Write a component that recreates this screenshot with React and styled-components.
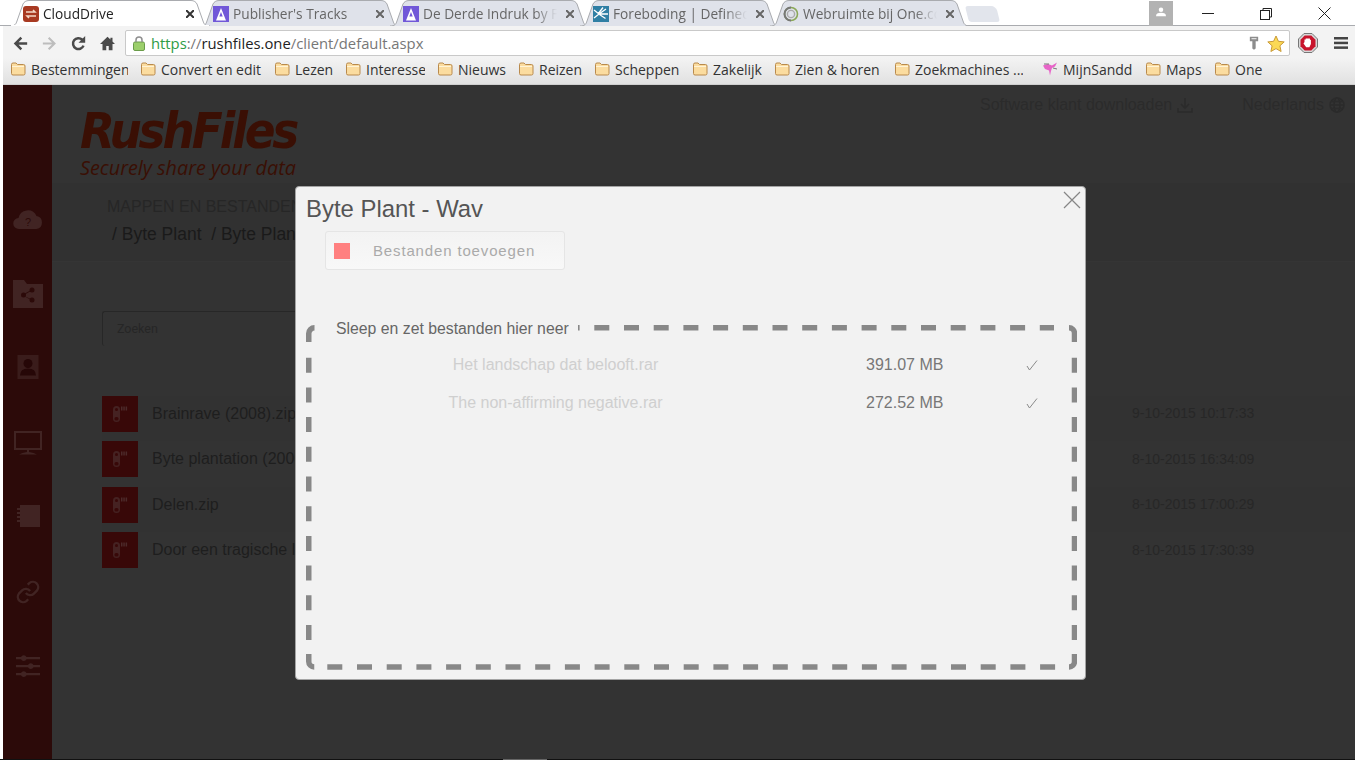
import React from "react";
import styled, { createGlobalStyle } from "styled-components";

const Global = createGlobalStyle`
  html, body { margin: 0; padding: 0; background: #fff; overflow: hidden; }
  * { box-sizing: border-box; }
`;
const UI = `"Open Sans", "Noto Sans", sans-serif`;
const WEB = `"Liberation Sans", Arial, sans-serif`;

const Screen = styled.div`
  width: 1355px; height: 760px; padding-left: 3px; display: flex; flex-direction: column;
  background: #fff; overflow: hidden;
`;
const TabStrip = styled.div`
  height: 26px; margin-left: -3px; padding-left: 10px; display: flex; align-items: flex-start; position: relative;
  border-bottom: 1px solid #a9abaf; background: #fff; flex: none;
`;
const Tab = styled.div`
  position: relative; width: 200px; height: 26px; margin-right: -10px; flex: none;
  display: flex; align-items: center; padding: 1px 0 0 13px; z-index: ${p => (p.$active ? 2 : 1)};
  color: ${p => (p.$active ? "#222" : "#666")};
  font: 13.7px ${UI};
`;
const TabShape = styled.svg`
  position: absolute; left: 0; top: 0; width: 200px; height: 26px;
  fill: ${p => (p.$active ? "#fff" : "#dfe2ea")}; stroke: #a9abaf; stroke-width: 1;
`;
const Favicon = styled.svg`width: 16px; height: 16px; flex: none; position: relative; margin-right: 4px;`;
const TabLabel = styled.span`
  position: relative; width: 134px; white-space: nowrap; overflow: hidden; flex: none;
  -webkit-mask-image: linear-gradient(to right, #000 112px, transparent 134px);
  mask-image: linear-gradient(to right, #000 112px, transparent 134px);
`;
const TabClose = styled.svg`
  position: relative; width: 8px; height: 8px; margin-left: 9px; stroke: ${p => (p.$active ? "#333" : "#666")}; stroke-width: 2; flex: none;
`;
const NewTab = styled.div`
  width: 31px; height: 16px; margin: 6px 0 0 8px; background: #e2e5ec; border-radius: 3px 5px 3px 3px; transform: skewX(14deg); flex: none; position: relative; left: -1px;
`;
const WindowControls = styled.div`
  margin-left: 150px; display: flex; align-items: flex-start; height: 25px;
`;
const Avatar = styled.div`
  width: 24px; height: 25px; background: #b2b2b2; display: flex; justify-content: center; padding-top: 6px; margin-top: 1px;
`;
const WinButton = styled.div`
  width: 58px; height: 25px; display: flex; align-items: center; justify-content: center; padding-top: 2px;
  margin-left: ${p => p.$ml || 0}px;
`;
const Toolbar = styled.div`
  height: 32px; flex: none; display: flex; align-items: center; background: #f3f3f3; padding-top: 2px;
`;
const NavIcons = styled.div`
  width: 122px; display: flex; align-items: center; padding-left: 10px; gap: 14px; flex: none;
`;
const NavIcon = styled.svg`width: 15px; height: 15px; flex: none;`;
const UrlBox = styled.div`
  width: 1165px; height: 26px; background: #fff; border: 1px solid #c9c9c9; border-radius: 2px;
  display: flex; align-items: center; padding: 0 4px 0 7px; flex: none;
  font: 14.8px ${UI};
`;
const Scheme = styled.span`color: #2e9c46; margin-left: 6px;`;
const Host = styled.span`color: #222;`;
const Path = styled.span`color: #777;`;
const UrlEnd = styled.div`margin-left: auto; display: flex; align-items: center; gap: 8px;`;
const ToolEnd = styled.div`display: flex; align-items: center; gap: 16px; margin-left: 8px; flex: none;`;
const Bookmarks = styled.div`
  height: 27px; flex: none; display: flex; align-items: center; padding: 0 0 4px 7px; gap: 12px; white-space: nowrap;
  background: linear-gradient(#f3f3f3, #e1e1e1); border-bottom: 1px solid #cfcfcf;
  font: 14px ${UI}; color: #333;
`;
const Bookmark = styled.div`display: flex; align-items: center; gap: 5px; flex: none;`;
const BookmarkLabel = styled.span`width: ${p => p.$w}px; flex: none; overflow: hidden;`;
const FolderIcon = styled.svg`width: 16px; height: 14px; flex: none;`;

const App = styled.div`
  flex: 1; min-height: 0; position: relative; display: flex; background: #333; font-family: ${WEB};
`;
const EdgeLine = styled.div`
  height: 1px; flex: none; margin-left: -3px;
  background: linear-gradient(to right, #111 503px, #666 503px, #666 547px, #111 547px);
`;
const Sidebar = styled.nav`
  width: 49px; flex: none; background: #2c0a09; display: flex; flex-direction: column; align-items: center;
  padding-top: 119px; gap: 44.5px;
`;
const SideIcon = styled.svg`width: 30px; height: 30px; flex: none; fill: #412423;`;
const Main = styled.main`flex: 1; min-width: 0; display: flex; flex-direction: column;`;
const Header = styled.header`
  height: 98px; flex: none; display: flex; justify-content: space-between; padding: 20px 10px 0 28px;
`;
const Logo = styled.div`display: flex; flex-direction: column;`;
const LogoName = styled.div`
  font: italic 700 50px/46px "DejaVu Sans", sans-serif; color: #3a0f04; letter-spacing: -3.4px; margin-top: 4px;
  transform: scale(.908, .98); transform-origin: top left;
`;
const LogoTag = styled.div`font: italic 400 19.8px/24px "Open Sans", sans-serif; color: #3a0f04; margin-top: 1px; white-space: nowrap;`;
const TopLinks = styled.div`display: flex; gap: 49px; color: #2b2b2b; font-size: 16px; height: 0;`;
const TopLink = styled.div`display: flex; align-items: center; gap: 5px; white-space: nowrap; height: 0;`;
const TopIcon = styled.svg`width: 16px; height: 16px; stroke: #2b2b2b; fill: none; stroke-width: 1.6;`;
const Crumbs = styled.section`
  height: 79px; flex: none; background: #313131; border-bottom: 1px solid #353535; padding: 15px 0 0 55px;
`;
const CrumbTitle = styled.div`font-size: 16px; line-height: 18px; color: #262626; white-space: nowrap;`;
const CrumbPath = styled.div`font-size: 17.5px; line-height: 20px; color: #1a1a1a; margin: 8px 0 0 5px; white-space: pre;`;
const Search = styled.div`
  width: 400px; height: 35px; margin: 49px 0 0 50px; border: 1px solid #272727; border-right: none; border-bottom: none; border-radius: 3px;
  padding: 9px 14px; font: 12.5px Roboto, sans-serif; color: #262626; flex: none;
`;
const List = styled.div`margin: 49.5px 0 0 50px; flex: none;`;
const Row = styled.div`
  height: 45.5px; display: flex; align-items: flex-start; background: ${p => (p.$even ? "#323232" : "#333")};
`;
const ZipTile = styled.div`
  width: 36px; height: 36px; background: #380808; display: flex; align-items: center; justify-content: center; flex: none;
`;
const ZipIcon = styled.svg`width: 18px; height: 18px;`;
const RowName = styled.div`margin: 9px 0 0 14px; font-size: 16px; line-height: 18px; color: #1e1e1e; white-space: nowrap;`;
const RowDate = styled.div`margin: 9.5px 99px 0 auto; width: 124px; font-size: 14px; line-height: 16px; color: #272727; white-space: nowrap;`;

const Modal = styled.div`
  position: absolute; left: 292px; top: 101px; width: 791px; height: 494px; background: #f2f2f2;
  border: 1px solid #a4a4a4; border-radius: 4px; padding: 8px 7px 0 10px; display: flex; flex-direction: column; color: #555;
`;
const CloseButton = styled.svg`
  position: absolute; right: 4px; top: 4px; width: 18px; height: 18px; stroke: #868686; stroke-width: 1.2;
`;
const Title = styled.h2`
  margin: 0; font-size: 23.9px; line-height: 27px; font-weight: 400; color: #555; white-space: nowrap;
`;
const AddButton = styled.div`
  width: 240px; height: 39px; margin: 9px 0 0 19px; flex: none; display: flex; align-items: center; padding-left: 8px;
  border: 1px solid #e5e5e5; border-radius: 3px; background: linear-gradient(#f3f3f3, #f8f8f8);
  font-size: 15px; letter-spacing: .85px; color: #aaa; white-space: nowrap;
`;
const RedSquare = styled.span`width: 16px; height: 16px; background: #ff8080; margin-right: 23px; flex: none;`;
const Drop = styled.fieldset`
  position: relative; margin: 49px 0 0 0; padding: 0; width: 771px; height: 345px; border: 5px solid transparent; min-width: 0; flex: none;
`;
const DashFrame = styled.svg`
  position: absolute; left: -5px; top: -13px; width: 771px; height: 345px; fill: none; stroke: #888; stroke-width: 5.5px;
`;
const DropLegend = styled.legend`
  position: relative; z-index: 1; margin-left: 20px; padding: 0 9px 0 5px; font-size: 15.8px; line-height: 19px; color: #666; background: #f2f2f2;
`;
const Files = styled.div`position: relative; padding-top: 17px; display: flex; flex-direction: column;`;
const FileRow = styled.div`
  height: 37.5px; display: grid; grid-template-columns: 489px 66px 90px 82px; align-items: start; font-size: 16px; line-height: 19px;
`;
const FileName = styled.div`text-align: center; color: #cfcfcf; white-space: nowrap;`;
const FileSize = styled.div`grid-column: 3; color: #777; white-space: nowrap;`;
const FileCheck = styled.svg`grid-column: 4; justify-self: end; width: 12px; height: 11px; margin-top: 5px; fill: none; stroke: #8a8a8a; stroke-width: 1;`;

const tabs = [
  { t: "CloudDrive", k: "cd", active: true },
  { t: "Publisher's Tracks", k: "a" },
  { t: "De Derde Indruk by Foreboding", k: "a" },
  { t: "Foreboding | Defined by", k: "f" },
  { t: "Webruimte bij One.com", k: "o" },
];
const TabFavicon = ({ k }) => (
  <Favicon viewBox="0 0 16 16">
    {k === "cd" && (<g><rect width="16" height="16" rx="3" fill="#a83a22" /><path d="M3 6h9l-2-2M13 10H4l2 2" stroke="#f3d9c8" strokeWidth="1.5" fill="none" /></g>)}
    {k === "a" && (<g><rect width="16" height="16" fill="#7158d8" /><path d="M3 14.5 8 2l5 12.5z" fill="#fff" /><path d="M6.3 10.5h3.4L8 6z" fill="#7158d8" /></g>)}
    {k === "f" && (<g><rect width="16" height="16" fill="#2f7fa4" /><path d="M1 4l5 4-5 4M5 8 10 1.500M6 8l7-5M6 8h9M6.500 8.500l6 4" stroke="#fff" strokeWidth="1.300" fill="none" /></g>)}
    {k === "o" && (<g fill="none"><circle cx="8" cy="8" r="6.5" stroke="#8aa858" strokeWidth="1.6" /><path d="M8 1.5A6.5 6.5 0 0 0 8 14.5" stroke="#777" strokeWidth="2" /><circle cx="8" cy="8" r="3.6" stroke="#aaa" strokeWidth="1.4" /></g>)}
  </Favicon>
);

const Folder = () => (
  <FolderIcon viewBox="0 0 16 14">
    <path d="M1.500 2.500q0-1.500 1.500-1.500h3l1.500 1.500h6q1.500 0 1.500 1.500v7.500q0 1.500-1.500 1.500H3q-1.500 0-1.500-1.500z" fill="#fbdc9f" stroke="#b98a4c" strokeWidth="1" />
    <path d="M2 4.500h12" stroke="#fff3d6" strokeWidth="1" />
  </FolderIcon>
);

const marks = [
  ["Bestemmingen", 97], ["Convert en edit", 101], ["Lezen", 38], ["Interesse", 59], ["Nieuws", 48], ["Reizen", 43],
  ["Scheppen", 65], ["Zakelijk", 49], ["Zien & horen", 87], ["Zoekmachines ...", 108],
];
const marksEnd = [["Maps", 36], ["One", 28]];

const ZipGlyph = () => (
  <ZipIcon viewBox="0 0 18 18">
    <rect x="2" y="1" width="7" height="16" rx="3.500" fill="#452222" />
    <rect x="4" y="3" width="3" height="3" rx="1.500" fill="#380808" />
    <rect x="3.500" y="12" width="4" height="3.500" rx="1.500" fill="#380808" />
    <path d="M10 1.500h1.500v4H10zM12.300 1.500h1.500v4h-1.500zM14.600 1.500h1.500v4h-1.500z" fill="#4c2a2a" />
  </ZipIcon>
);

const rows = [
  ["Brainrave (2008).zip", "9-10-2015 10:17:33"],
  ["Byte plantation (2006).zip", "8-10-2015 16:34:09"],
  ["Delen.zip", "8-10-2015 17:00:29"],
  ["Door een tragische lot.zip", "8-10-2015 17:30:39"],
];

const DASH = "15 14.7";

export default function CloudDrive() {
  return (
    <Screen>
      <Global />
      <TabStrip>
        {tabs.map((tab) => (
          <Tab key={tab.t} $active={tab.active}>
            <TabShape $active={tab.active} viewBox="0 0 200 26">
              <path d="M0 26C5 26 6 24 7 21L13 4C14 2 16 .5 19 .5H181C184 .5 186 2 187 4L193 21C194 24 195 26 200 26" />
              {tab.active && <rect x="1" y="25" width="198" height="1.500" stroke="none" />}
            </TabShape>
            <TabFavicon k={tab.k} />
            <TabLabel>{tab.t}</TabLabel>
            <TabClose $active={tab.active} viewBox="0 0 8 8"><path d="M0 0 8 8M8 0 0 8" /></TabClose>
          </Tab>
        ))}
        <NewTab />
        <WindowControls>
          <Avatar>
            <svg width="10" height="10" viewBox="0 0 12 12" fill="#fff"><circle cx="6" cy="3.200" r="2.700" /><path d="M0 11q0-4 6-4t6 4z" /></svg>
          </Avatar>
          <WinButton $ml={6}><svg width="12" height="2"><rect width="12" height="1" fill="#222" /></svg></WinButton>
          <WinButton><svg width="12" height="12" viewBox="0 0 12 12" fill="none" stroke="#222"><path d="M3 2.500V.5h8.500V9H9.500" /><rect x=".5" y="2.500" width="9" height="9" /></svg></WinButton>
          <WinButton><svg width="13" height="13" viewBox="0 0 13 13" stroke="#222" strokeWidth="1"><path d="M.5.500 12.500 12.500M12.500.500 .5 12.500" /></svg></WinButton>
        </WindowControls>
      </TabStrip>
      <Toolbar>
        <NavIcons>
          <NavIcon viewBox="0 0 18 18" fill="none" stroke="#4a4a4a" strokeWidth="3"><path d="M17 9H3M10 2 3 9l7 7" /></NavIcon>
          <NavIcon viewBox="0 0 18 18" fill="none" stroke="#bdbdbd" strokeWidth="2.500"><path d="M1 9h14M8 2l7 7-7 7" /></NavIcon>
          <NavIcon viewBox="0 0 18 18" fill="none" stroke="#4a4a4a" strokeWidth="3"><path d="M15 11.500A6.500 6.500 0 1 1 13.500 4.500" /><path d="M17 0v8h-8z" fill="#4a4a4a" stroke="none" /></NavIcon>
          <NavIcon viewBox="0 0 18 18" fill="#4a4a4a"><path d="M9 1 0 9.500h3V17h4.500v-5h3v5H15V9.500h3L15 6.700V2h-2.500v2.300z" /></NavIcon>
        </NavIcons>
        <UrlBox>
          <svg width="12" height="15" viewBox="0 0 12 15" fill="none"><rect x=".5" y="6" width="11" height="8.500" rx="1.500" fill="#9ccf6c" stroke="#6a9c4a" /><path d="M3 6V4a3 3 0 0 1 6 0v2" stroke="#8f8f8f" strokeWidth="1.500" /></svg>
          <Scheme>https</Scheme><Path>://</Path><Host>rushfiles.one</Host><Path>/client/default.aspx</Path>
          <UrlEnd>
            <svg width="10" height="16" viewBox="0 0 12 17" fill="#8c8c8c"><path d="M1 1h10v5.500H8V15l-2 1.500L4 15V6.500H1z" /><rect x="3" y="2.500" width="6" height="1.500" fill="#ddd" /></svg>
            <svg width="18" height="17" viewBox="0 0 18 17"><path d="m9 1 2.400 5.300 5.800.6-4.300 3.900 1.200 5.700L9 13.600l-5.100 2.900 1.200-5.700L.8 6.900l5.800-.6z" fill="#fbd955" stroke="#c99a38" /></svg>
          </UrlEnd>
        </UrlBox>
        <ToolEnd>
          <svg width="20" height="20" viewBox="0 0 20 20"><path d="M6 .5h8L19.500 6v8L14 19.500H6L.5 14V6z" fill="#d8d8d8" stroke="#777" /><path d="M6.700 2.500h6.600l4.200 4.200v6.600l-4.200 4.200H6.700l-4.200-4.200V6.700z" fill="#c8142c" /><path d="M6.500 9V6.500h1.200V5.500h4.200v1l1 .5v4l-1.500 3.200H8.200L5.500 10.500z" fill="#fff" /></svg>
          <svg width="14" height="12" viewBox="0 0 14 12" fill="#444"><rect width="14" height="2.500" /><rect y="4.700" width="14" height="2.500" /><rect y="9.400" width="14" height="2.500" /></svg>
        </ToolEnd>
      </Toolbar>
      <Bookmarks>
        {marks.map(([m, w]) => (
          <Bookmark key={m}><Folder /><BookmarkLabel $w={w}>{m}</BookmarkLabel></Bookmark>
        ))}
        <Bookmark>
          <svg width="16" height="16" viewBox="0 0 16 16" fill="none" style={{ marginLeft: 7 }}><path d="M1 4.500 6 3l4 1.500 5-3-2 4-3 1.500-1 3-1 4.500-1-5L3 8z" fill="#e765c8" /><path d="M2 3h5M11 7l4 1" stroke="#777" /></svg>
          <BookmarkLabel $w={70}>MijnSandd</BookmarkLabel>
        </Bookmark>
        {marksEnd.map(([m, w]) => (
          <Bookmark key={m}><Folder /><BookmarkLabel $w={w}>{m}</BookmarkLabel></Bookmark>
        ))}
      </Bookmarks>
      <App>
        <Sidebar>
          <SideIcon viewBox="0 0 30 30"><path d="M6 25a5.500 5.500 0 0 1-.5-11A9.500 9.500 0 0 1 23.500 12a6.600 6.600 0 0 1 0 13z" /><text x="15" y="22" fontSize="11" fill="#2c0a09" textAnchor="middle" fontFamily="Liberation Sans">?</text></SideIcon>
          <SideIcon viewBox="0 1 30 30"><path d="M0 2h11l3 4h16v24H0z" /><g fill="#2c0a09"><circle cx="10.500" cy="17" r="2.500" /><circle cx="19" cy="12" r="2.500" /><circle cx="19" cy="22" r="2.500" /><path d="m10 16.500 9-5v1l-9 5 9 4v1l-9-5z" /></g></SideIcon>
          <SideIcon viewBox="0 1 30 30"><rect x="4.500" y="3" width="21" height="24" fill="#3a1c1b" /><circle cx="15" cy="11.500" r="4.500" fill="#260707" /><path d="M7 23.500q0-7 8-7t8 7z" fill="#260707" /></SideIcon>
          <SideIcon viewBox="0 0 30 30"><path fillRule="evenodd" d="M1 3h28v19H1zM3 5v15h24V5z" /><path d="M14 22h2v2q5 .5 8 2.500H6q3-2 8-2.500z" /></SideIcon>
          <SideIcon viewBox="0 0 30 30"><path d="M7 3h20v22H7z" /><path d="M4 6h5v2H4zM4 10h5v2H4zM4 14h5v2H4zM4 18h5v2H4z" /></SideIcon>
          <SideIcon viewBox="-2 -2 28 28" style={{ fill: "none", stroke: "#412423", strokeWidth: 2.200 }}><path d="M10 13a5 5 0 0 0 7.500.5l3-3a5 5 0 0 0-7-7l-1.800 1.700" /><path d="M14 11a5 5 0 0 0-7.500-.5l-3 3a5 5 0 0 0 7 7l1.700-1.700" /></SideIcon>
          <SideIcon viewBox="0 0 30 30"><path fillRule="evenodd" d="M3 6h5a3 3 0 0 1 5.500 0H27v2.200H13.500a3 3 0 0 1-5.500 0H3zM3 14h12a3 3 0 0 1 5.500 0H27v2.200h-6.500a3 3 0 0 1-5.500 0H3zM3 22h5a3 3 0 0 1 5.500 0H27v2.200H13.500a3 3 0 0 1-5.500 0H3z" /></SideIcon>
        </Sidebar>
        <Main>
          <Header>
            <Logo>
              <LogoName>RushFiles</LogoName>
              <LogoTag>Securely share your data</LogoTag>
            </Logo>
            <TopLinks>
              <TopLink>Software klant downloaden
                <TopIcon viewBox="0 0 16 16"><path d="M8 1v10M4 7l4 4 4-4M1 11v4h14v-4" /></TopIcon>
              </TopLink>
              <TopLink>Nederlands
                <TopIcon viewBox="0 0 16 16"><circle cx="8" cy="8" r="7" /><ellipse cx="8" cy="8" rx="3" ry="7" /><path d="M1 8h14M2 4.500h12M2 11.500h12" /></TopIcon>
              </TopLink>
            </TopLinks>
          </Header>
          <Crumbs>
            <CrumbTitle>MAPPEN EN BESTANDEN</CrumbTitle>
            <CrumbPath>/ Byte Plant  / Byte Plant</CrumbPath>
          </Crumbs>
          <Search>Zoeken</Search>
          <List>
            {rows.map(([n, d], i) => (
              <Row key={n} $even={i % 2 === 0}>
                <ZipTile><ZipGlyph /></ZipTile>
                <RowName>{n}</RowName>
                <RowDate>{d}</RowDate>
              </Row>
            ))}
          </List>
        </Main>
        <Modal>
          <CloseButton viewBox="0 0 18 18"><path d="M1 1 17 17M17 1 1 17" /></CloseButton>
          <Title>Byte Plant - Wav</Title>
          <AddButton><RedSquare />Bestanden toevoegen</AddButton>
          <Drop>
            <DashFrame viewBox="0 0 771 345">
              <path strokeDasharray={DASH} d="M258.600 2.750H748" />
              <path strokeDasharray={DASH} d="M21.300 342H750" />
              <path strokeDasharray={DASH} d="M2.750 32.700V316" />
              <path strokeDasharray={DASH} d="M768.500 32.700V316" />
              <path d="M2.750 17V8.500A5.750 5.750 0 0 1 8.500 2.750" />
              <path d="M763 2.750A5.500 5.500 0 0 1 768.500 8.250V17" />
              <path d="M2.750 329V336.500A5.500 5.500 0 0 0 8.250 342" />
              <path d="M763 342A5.500 5.500 0 0 0 768.500 336.500V329" />
            </DashFrame>
            <DropLegend>Sleep en zet bestanden hier neer</DropLegend>
            <Files>
              <FileRow>
                <FileName>Het landschap dat belooft.rar</FileName>
                <FileSize>391.07 MB</FileSize>
                <FileCheck viewBox="0 0 12 11"><path d="M1 6l2.500 4L11 .5" /></FileCheck>
              </FileRow>
              <FileRow>
                <FileName>The non-affirming negative.rar</FileName>
                <FileSize>272.52 MB</FileSize>
                <FileCheck viewBox="0 0 12 11"><path d="M1 6l2.500 4L11 .5" /></FileCheck>
              </FileRow>
            </Files>
          </Drop>
        </Modal>
      </App>
      <EdgeLine />
    </Screen>
  );
}
